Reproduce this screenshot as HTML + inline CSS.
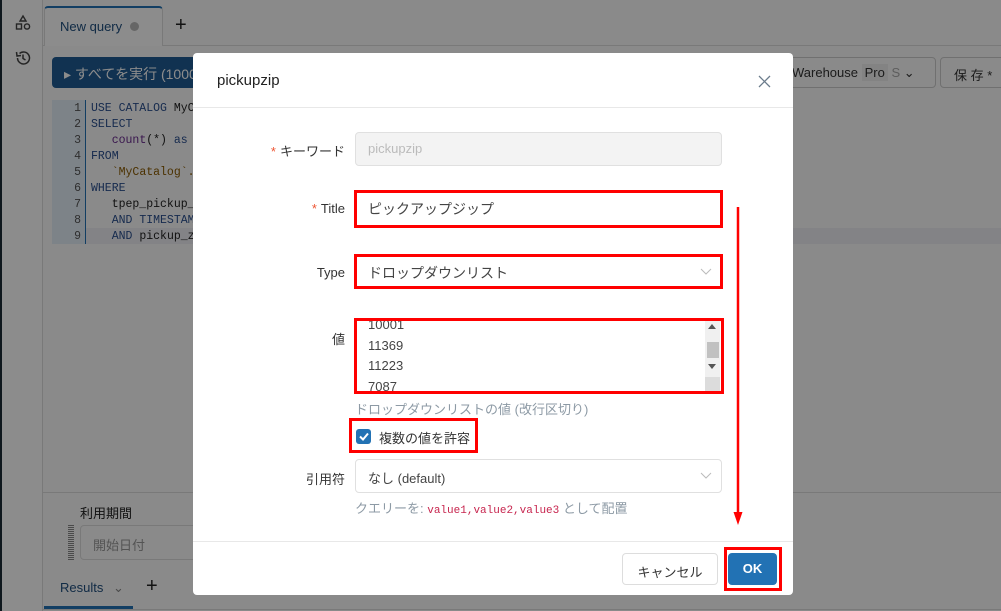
<!DOCTYPE html>
<html><head><meta charset="utf-8">
<style>
*{box-sizing:border-box;margin:0;padding:0}
body{width:1001px;height:611px;overflow:hidden;position:relative;background:#fbfbfb;font-family:"Liberation Sans","Noto Sans CJK JP",sans-serif;font-size:13px;color:#222}
.abs{position:absolute}
.mono{font-family:"Liberation Mono","DejaVu Sans Mono",monospace;font-size:11.5px}
.kw{color:#2a4f8f}.fn{color:#6a2a8f}.str{color:#8a5a00}
.ov{position:absolute;left:0;top:0;width:1001px;height:611px;background:rgba(0,0,0,0.45)}
.modal{position:absolute;left:193px;top:53px;width:600px;height:542px;background:#fff;border-radius:4px}
.lbl{position:absolute;right:448px;font-size:13px;color:#333;text-align:right;white-space:nowrap}
.req{color:#e53;margin-right:4px}
.inp{position:absolute;left:162px;width:367px;border:1px solid #e0e0e0;border-radius:4px;font-size:14px;color:#333;padding-left:12px}
.red{position:absolute;border:3px solid #ff0000}
</style></head><body>
<div class="abs" style="left:0;top:0;width:2px;height:611px;background:#1a2a36"></div>
<div class="abs" style="left:2px;top:0;width:41px;height:611px;background:#fff;border-right:1px solid #ddd"></div>
<svg class="abs" style="left:14px;top:14px" width="18" height="18" viewBox="0 0 18 18" fill="none" stroke="#444" stroke-width="1.4"><path d="M9 2 L12 7 L6 7Z"/><rect x="2.5" y="10" width="5" height="5"/><circle cx="13" cy="12.5" r="2.6"/></svg>
<svg class="abs" style="left:14px;top:49px" width="18" height="18" viewBox="0 0 18 18" fill="none" stroke="#444" stroke-width="1.5"><path d="M3.5 9 A6 6 0 1 0 5.5 4.5"/><path d="M2.5 3 L3 7 L7 6.5"/><path d="M9 5.5 V9.5 L11.5 11"/></svg>
<div class="abs" style="left:43px;top:45px;width:958px;height:1px;background:#ddd"></div>
<div class="abs" style="left:44px;top:6px;width:119px;height:40px;background:#fff;border:1px solid #ddd;border-top:2px solid #2272b4;border-bottom:none;border-radius:4px 4px 0 0"></div>
<div class="abs" style="left:60px;top:19px;font-size:13px;color:#1f4f7f">New query</div>
<div class="abs" style="left:130px;top:22px;width:9px;height:9px;border-radius:50%;background:#bbb"></div>
<div class="abs" style="left:175px;top:14px;font-size:20px;color:#222">+</div>
<div class="abs" style="left:52px;top:57px;width:160px;height:31px;background:#1f5c94;border-radius:4px;color:#fff;font-size:14px;padding:7px 0 0 12px">▸ すべてを実行 (1000)</div>
<div class="abs" style="left:786px;top:57px;width:150px;height:31px;border:1px solid #ccc;border-radius:4px;font-size:13px;padding:7px 0 0 5px;color:#333">Warehouse <span style="background:#eee;padding:1px 3px">Pro</span> <span style="color:#aaa">S</span> ⌄</div>
<div class="abs" style="left:940px;top:57px;width:70px;height:31px;border:1px solid #ccc;border-radius:4px;font-size:13px;padding:7px 0 0 13px;color:#333">保 存 *</div>
<div class="abs" style="left:52px;top:100px;width:34px;height:144px;background:#e4eef8;border-right:1px solid #2272b4"></div>
<div class="abs" style="left:86px;top:228px;width:915px;height:16px;background:#eeeef4"></div>
<div class="abs mono" style="left:52px;top:101px;width:29px;text-align:right;line-height:16px;color:#555">1<br>2<br>3<br>4<br>5<br>6<br>7<br>8<br>9</div>
<div class="abs mono" style="left:91px;top:101px;line-height:16px;white-space:pre"><span class="kw">USE CATALOG</span> MyCatalog;
<span class="kw">SELECT</span>
   <span class="fn">count</span>(*) <span class="kw">as</span> t
<span class="kw">FROM</span>
   <span class="str">`MyCatalog`.`</span>
<span class="kw">WHERE</span>
   tpep_pickup_d
   <span class="kw">AND TIMESTAMP</span>
   <span class="kw">AND</span> pickup_zi</div>
<div class="abs" style="left:43px;top:492px;width:958px;height:1px;background:#ddd"></div>
<div class="abs" style="left:80px;top:503px;font-size:13px;color:#222">利用期間</div>
<div class="abs" style="left:68px;top:525px;width:6px;height:35px;background:repeating-linear-gradient(#888 0 1px,transparent 1px 2px)"></div>
<div class="abs" style="left:80px;top:525px;width:130px;height:35px;border:1px solid #ddd;border-radius:4px;padding:9px 0 0 12px;color:#999;font-size:13px">開始日付</div>
<div class="abs" style="left:60px;top:580px;font-size:13px;color:#1f4f7f">Results <span style="color:#888;margin-left:6px">⌄</span></div>
<div class="abs" style="left:146px;top:575px;font-size:20px">+</div>
<div class="abs" style="left:44px;top:606px;width:89px;height:3px;background:#2272b4"></div>
<div class="abs" style="left:43px;top:609px;width:958px;height:1px;background:#ddd"></div>
<div class="ov"></div>

<div class="modal">
  <div class="abs" style="left:24px;top:19px;font-size:15px;color:#222">pickupzip</div>
  <svg class="abs" style="left:565px;top:22px" width="13" height="13" viewBox="0 0 13 13" stroke="#6b7c8c" stroke-width="1.3"><path d="M1 1L12 12M12 1L1 12"/></svg>
  <div class="abs" style="left:0;top:54px;width:600px;height:1px;background:#e8e8e8"></div>

  <div class="lbl" style="top:88px"><span class="req">*</span>キーワード</div>
  <div class="inp" style="top:79px;height:34px;background:#f3f3f3;color:#bbb;font-size:13px;padding-top:8px">pickupzip</div>

  <div class="lbl" style="top:148px"><span class="req">*</span>Title</div>
  <div class="inp" style="top:138px;height:36px;padding-top:7px;color:#444">ピックアップジップ</div>

  <div class="lbl" style="top:212px">Type</div>
  <div class="inp" style="top:202px;height:34px;padding-top:7px;color:#444">ドロップダウンリスト</div>
  <svg class="abs" style="left:507px;top:215px" width="12" height="8" viewBox="0 0 12 8" fill="none" stroke="#bbb"><path d="M1 1L6 6L11 1"/></svg>

  <div class="lbl" style="top:276px">値</div>
  <div class="inp" style="top:266px;height:74px;overflow:hidden;font-size:13px;color:#444;line-height:20.5px;padding-top:0">
    <div style="margin-top:-5px">10001<br>11369<br>11223<br>7087</div>
  </div>
  <div class="abs" style="left:512px;top:268px;width:15px;height:70px;background:#f0f0f0"></div>
  <div class="abs" style="left:515px;top:271px;width:0;height:0;border:4px solid transparent;border-bottom:5px solid #555;border-top:0"></div>
  <div class="abs" style="left:514px;top:289px;width:12px;height:16px;background:#c1c1c1"></div>
  <div class="abs" style="left:515px;top:311px;width:0;height:0;border:4px solid transparent;border-top:5px solid #555;border-bottom:0"></div>
  <div class="abs" style="left:512px;top:324px;width:15px;height:14px;background:#dcdcdc"></div>
  <div class="abs" style="left:162px;top:346px;font-size:13px;color:#8d9aa5">ドロップダウンリストの値 (改行区切り)</div>

  <div class="abs" style="left:163px;top:376px;width:15px;height:15px;background:#2272b4;border-radius:3px"></div>
  <svg class="abs" style="left:166px;top:379px" width="10" height="9" viewBox="0 0 10 9" fill="none" stroke="#fff" stroke-width="2"><path d="M1 4.5L4 7.5L9 1.5"/></svg>
  <div class="abs" style="left:186px;top:375px;font-size:13px;color:#333">複数の値を許容</div>

  <div class="lbl" style="top:416px">引用符</div>
  <div class="inp" style="top:406px;height:34px;padding-top:8px;font-size:13px;color:#444">なし (default)</div>
  <svg class="abs" style="left:507px;top:419px" width="12" height="8" viewBox="0 0 12 8" fill="none" stroke="#bbb"><path d="M1 1L6 6L11 1"/></svg>
  <div class="abs" style="left:162px;top:445px;font-size:13px;color:#8d9aa5">クエリーを: <span class="mono" style="color:#c7254e;font-size:11px">value1,value2,value3</span> として配置</div>

  <div class="abs" style="left:0;top:488px;width:600px;height:1px;background:#e8e8e8"></div>
  <div class="abs" style="left:429px;top:500px;width:96px;height:32px;border:1px solid #ddd;border-radius:4px;font-size:13px;padding-top:8px;text-align:center;color:#333">キャンセル</div>
  <div class="abs" style="left:535px;top:500px;width:49px;height:32px;background:#2272b4;border-radius:4px;font-size:13px;font-weight:bold;padding-top:8px;text-align:center;color:#fff">OK</div>
</div>

<div class="red" style="left:354px;top:190px;width:369px;height:38px"></div>
<div class="red" style="left:354px;top:254px;width:369px;height:35px"></div>
<div class="red" style="left:354px;top:318px;width:370px;height:76px"></div>
<div class="red" style="left:349px;top:418px;width:129px;height:35px"></div>
<div class="red" style="left:724px;top:547px;width:58px;height:44px"></div>
<svg class="abs" style="left:730px;top:205px" width="16" height="322" viewBox="0 0 16 322"><path d="M8 2V310" stroke="#f00" stroke-width="2.5"/><path d="M3.5 307L8 320L12.5 307Z" fill="#f00"/></svg>
</body></html>
